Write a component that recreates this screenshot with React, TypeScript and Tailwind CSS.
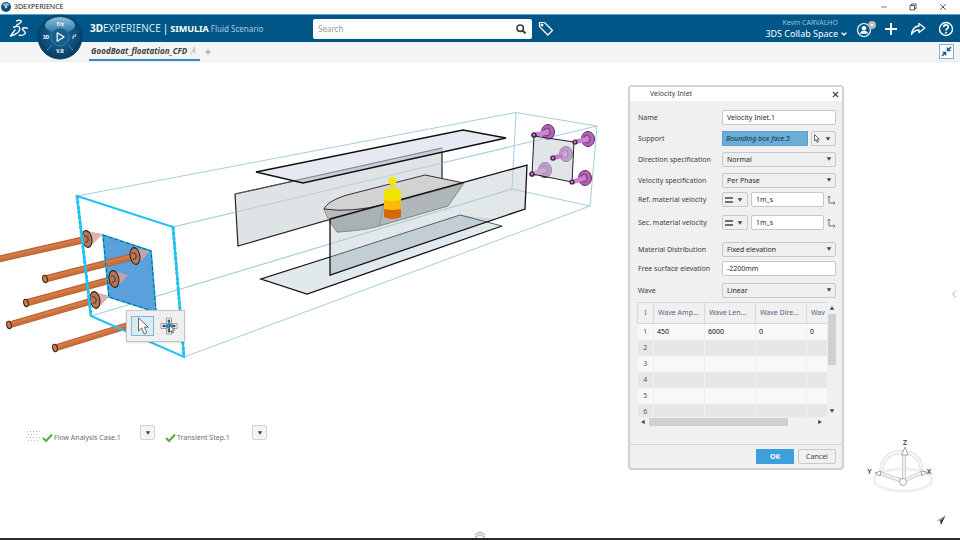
import type { ReactNode } from 'react';
import { ChevronDown, ChevronLeft, Minus, Plus, X } from 'lucide-react';

const FIELD =
	'min-w-0 rounded-xs border border-[#c6c8ca] px-1 text-[7px] leading-3 text-[#2b2b2b] outline-none';

const ICON_BUTTON = 'flex shrink-0 items-center justify-center';

function Caret({ className = '' }: { className?: string }) {
	return (
		<svg viewBox="0 0 6 4" className={`h-1 w-[6px] shrink-0 ${className}`} aria-hidden="true">
			<path d="M0.700 0.300h4.600L3 3.700z" fill="#444" />
		</svg>
	);
}

/* ---------- top bars ---------- */

function TitleBar() {
	return (
		<div className="flex h-[14px] items-center justify-between bg-white pr-3 pl-[1px]">
			<div className="flex items-center gap-[3px] text-[7px] leading-3 text-[#222]">
				<svg viewBox="0 0 10 10" className="size-[10px]" aria-hidden="true">
					<circle cx="5" cy="5" r="5" fill="#0a4f7d" />
					<path d="M1.500 3a4.200 4.200 0 0 1 7 0L5 5z" fill="#7fb8da" />
					<path d="M4.200 3.800v2.600L6.500 5z" fill="#fff" />
				</svg>
				3DEXPERIENCE
			</div>
			<div className="flex items-center gap-[21px] text-[#333]">
				<button type="button" aria-label="Minimize" className={ICON_BUTTON}>
					<Minus className="size-2" />
				</button>
				<button type="button" aria-label="Restore" className={ICON_BUTTON}>
					<svg viewBox="0 0 8 8" className="size-2" fill="none" stroke="#333" strokeWidth="0.800">
						<path d="M1 2.500h4.500V7H1zM2.500 2.500V1H7v4.500H5.500" />
					</svg>
				</button>
				<button type="button" aria-label="Close window" className={ICON_BUTTON}>
					<X className="size-[10px]" />
				</button>
			</div>
		</div>
	);
}

function DassaultLogo() {
	return (
		<svg
			viewBox="0 0 20 20"
			className="size-5 shrink-0"
			fill="none"
			stroke="#fff"
			strokeWidth="1.400"
			strokeLinecap="round"
			strokeLinejoin="round"
			aria-hidden="true"
		>
			<path d="M8.500 1.800c2.600-.8 4.800-.6 4.800.5 0 1.200-2.400 2.700-4.600 3.700" />
			<path d="M5.500 8.300c3.400-1.500 6.300-1.400 6.300 1.200 0 3-3.600 6-9.300 7.500L7 10.800" />
			<path d="M19.500 9.200c-2.800-1-5.200-.4-5 1 .2 1.300 3.200 2.200 2.800 4-.4 1.600-3.300 2.400-6 2" />
		</svg>
	);
}

function Compass() {
	return (
		<svg viewBox="0 0 50 50" className="size-full" aria-hidden="true">
			<defs>
				<radialGradient id="compassBody" cx="50%" cy="45%" r="55%">
					<stop offset="0" stopColor="#1c6c9e" />
					<stop offset="0.6" stopColor="#0f527f" />
					<stop offset="1" stopColor="#083b60" />
				</radialGradient>
				<linearGradient id="compassTop" x1="0" y1="0" x2="0" y2="1">
					<stop offset="0" stopColor="#8fc0dc" />
					<stop offset="1" stopColor="#2f7aa8" />
				</linearGradient>
			</defs>
			<circle cx="25" cy="25" r="22" fill="url(#compassBody)" stroke="#0b4268" />
			<path d="M10 13.500q1-7 15-8.500q14 1.500 15 8.500q0 4-7.500 6.500a10 10 0 0 0-15 0Q10 17.500 10 13.500z" fill="url(#compassTop)" />
			<circle cx="25" cy="25" r="9" fill="#14608f" stroke="#3b86b2" strokeWidth="0.800" />
			<path d="M12 38l5-5M38 38l-5-5" stroke="#5b9dc4" strokeWidth="0.800" />
			<path d="M22.200 20.800v8.400l6.800-4.200z" fill="none" stroke="#fff" strokeWidth="1.200" strokeLinejoin="round" />
			<g fill="#fff" fontSize="5" fontWeight="700" textAnchor="middle">
				<text x="11" y="27">3D</text>
				<text x="25" y="14" fontStyle="italic">Y/x</text>
				<text x="39" y="27" fontStyle="italic">i²</text>
				<text x="25" y="41">V.R</text>
			</g>
		</svg>
	);
}

function HeaderActions() {
	return (
		<div className="flex items-center gap-3 text-white">
			<div className="flex flex-col items-end">
				<span className="pr-[6px] text-[7px] leading-[10px] text-[#9cc4dc]">Kevin CARVALHO</span>
				<button type="button" className="-mr-1 flex items-center gap-[2px] text-[9px] leading-3">
					3DS Collab Space
					<ChevronDown className="size-2" strokeWidth={4} />
				</button>
			</div>
			<button type="button" aria-label="Profile" className={ICON_BUTTON}>
				<svg viewBox="0 0 20 16" className="h-4 w-5">
					<circle cx="8" cy="9" r="6.500" fill="none" stroke="#fff" strokeWidth="1.200" />
					<circle cx="8" cy="7.200" r="2.300" fill="#fff" />
					<path d="M4 12.800c.3-2.200 1.600-3 4-3s3.700.8 4 3z" fill="#fff" />
					<circle cx="16" cy="4" r="4" fill="#b6b9bb" />
					<circle cx="16" cy="4" r="1.300" fill="#fff" />
				</svg>
			</button>
			<button type="button" aria-label="Add" className={`${ICON_BUTTON} -ml-1`}>
				<svg viewBox="0 0 14 14" className="size-[14px]" stroke="#fff" strokeWidth="2">
					<path d="M7 1v12M1 7h12" />
				</svg>
			</button>
			<button type="button" aria-label="Share" className={ICON_BUTTON}>
				<svg viewBox="0 0 16 14" className="h-[14px] w-4" fill="none" stroke="#fff" strokeWidth="1.300" strokeLinejoin="round">
					<path d="M9 1.500l5.800 4.500L9 10.500V8C5.500 8 3.300 9.300 1.500 12.500 2 7.500 4.500 4.500 9 4z" />
				</svg>
			</button>
			<button type="button" aria-label="Help" className={ICON_BUTTON}>
				<svg viewBox="0 0 16 16" className="size-4" fill="none" stroke="#fff" strokeWidth="1.400">
					<circle cx="8" cy="8" r="6.500" />
					<path d="M5.700 6.300c0-3.200 4.600-3 4.600-.4C10.300 7.600 8 7.600 8 9.500" strokeWidth="1.700" />
					<path d="M8 10.700v1.700" strokeWidth="1.700" />
				</svg>
			</button>
		</div>
	);
}

function Header() {
	return (
		<header className="relative flex h-7 items-center justify-between border-t border-[#5ba5c9] bg-[#005686] pr-[6px] pl-2">
			<DassaultLogo />
			<button type="button" aria-label="Compass" className="absolute top-[-3px] left-[35px] z-10 size-[50px]">
				<Compass />
			</button>
			<div className="flex flex-1 items-center">
				<div className="flex w-[285px] shrink-0 items-baseline gap-[2px] pl-[62px] whitespace-nowrap text-white">
					<span className="text-[10px] leading-4 text-[#d5e7f1]">
						<b className="text-white">3D</b>EXPERIENCE
					</span>
					<span className="text-[10px] leading-4">|</span>
					<b className="text-[9px] leading-4">SIMULIA</b>
					<span className="text-[8px] leading-4 text-[#a6cde2]">Fluid Scenario</span>
				</div>
				<form role="search" className="flex h-5 w-[219px] items-center rounded-xs bg-white pr-[6px] pl-[5px]">
					<input
						aria-label="Search"
						placeholder="Search"
						className="min-w-0 flex-1 text-[8px] leading-3 outline-none placeholder:text-[#9a9a9a]"
					/>
					<button type="submit" aria-label="Run search" className={ICON_BUTTON}>
						<svg viewBox="0 0 10 10" className="size-[10px]" fill="none" stroke="#3f3f3f">
							<circle cx="4.200" cy="4.200" r="3.200" strokeWidth="1.600" />
							<path d="M6.500 6.500l3 3" strokeWidth="2" />
						</svg>
					</button>
				</form>
				<button type="button" aria-label="6WTags" className={`${ICON_BUTTON} ml-[6px]`}>
					<svg viewBox="0 0 16 16" className="size-4" fill="none" stroke="#fff" strokeWidth="1.200" strokeLinejoin="round">
						<path d="M1.500 1.500v4.200l8.300 8.300 4.700-4.500L6.500 1.500z" />
						<circle cx="4" cy="4" r="0.900" />
					</svg>
				</button>
			</div>
			<HeaderActions />
		</header>
	);
}

function TabBar() {
	return (
		<nav className="flex h-5 items-stretch justify-between border-b border-[#e8eaeb] bg-[#f2f4f5] pr-[6px] pl-[89px]">
			<div className="flex items-stretch gap-1">
				<a
					href="#goodboat"
					className="flex w-[111px] items-center gap-1 border-b-2 border-[#3d8abd] pl-[2px] text-[8px] leading-3 font-bold whitespace-nowrap text-[#3f3f3f] italic"
				>
					GoodBoat_floatation_CFD
					<span className="font-normal text-[#b5b5b5]">A</span>
				</a>
				<button type="button" aria-label="New tab" className={ICON_BUTTON}>
					<Plus className="size-2 text-[#999]" strokeWidth={3} />
				</button>
			</div>
			<button
				type="button"
				aria-label="Leave full screen"
				className="mt-[2px] flex size-[15px] items-center justify-center border border-[#7fb0cc] bg-white"
			>
				<svg viewBox="0 0 11 11" className="size-[11px]" fill="#0b5a8a" stroke="#0b5a8a">
					<path d="M6 5V1.500L9.500 5zM5 6v3.500L1.500 6z" strokeWidth="0.500" />
					<path d="M7.500 3.500L10 1M3.500 7.500L1 10" strokeWidth="1.500" />
				</svg>
			</button>
		</nav>
	);
}

/* ---------- 3D scene ---------- */

const inletArrows = [
	{ tail: [-10, 261], disc: [87, 239], tip: [103, 234] },
	{ tail: [45, 279], disc: [135, 256], tip: [150, 251] },
	{ tail: [26, 303], disc: [114, 279], tip: [128, 275] },
	{ tail: [9, 325], disc: [95, 300], tip: [110, 296] },
];

const outletArrows = [
	{ tail: [534, 135], disc: [548, 132] },
	{ tail: [553, 158], disc: [566, 154] },
	{ tail: [532, 174], disc: [545, 170] },
	{ tail: [575, 142], disc: [588, 139] },
	{ tail: [572, 182], disc: [585, 178] },
];

function Shaft({ from, to }: { from: number[]; to: number[] }) {
	return (
		<>
			<path d={`M${from}L${to}`} stroke="#b9622f" strokeWidth="7" />
			<path d={`M${from}L${to}`} stroke="#cb6f3c" strokeWidth="5" />
			<path d={`M${from[0]} ${from[1] - 1}L${to[0]} ${to[1] - 1}`} stroke="#d47d49" strokeWidth="2" />
			<ellipse cx={from[0]} cy={from[1]} rx="2.300" ry="3.800" fill="#c97a50" stroke="#3a2013" transform={`rotate(-12 ${from})`} />
		</>
	);
}

function OutletArrow({ tail, disc }: { tail: number[]; disc: number[] }) {
	return (
		<g>
			<ellipse cx={disc[0]} cy={disc[1]} rx="6.500" ry="7.500" fill="#b565b8" stroke="#5b2d60" />
			<ellipse cx={disc[0] - 1} cy={disc[1]} rx="3.300" ry="4" fill="#c073c2" stroke="#5b2d60" strokeWidth="0.800" />
			<path d={`M${tail}L${disc}`} stroke="#cf80d2" strokeWidth="4.500" />
			<circle cx={tail[0]} cy={tail[1]} r="2" fill="#b77cba" stroke="#3a1a40" strokeWidth="1.200" />
		</g>
	);
}

function Scene() {
	return (
		<svg viewBox="0 62 625 361" className="h-[361px] w-[625px] shrink-0" fill="none" role="img" aria-label="Boat in fluid domain">
			{/* bounding box */}
			<g stroke="#a5cde0">
				<path d="M77 196L516 112.500L597 126L173 227" />
				<path d="M516 112.500L512 189L590 206L597 126" />
				<path d="M91 316L512 189M184 357L590 206" />
			</g>

			{/* outlet */}
			{outletArrows.slice(0, 3).map((a) => (
				<OutletArrow key={a.tail.join()} {...a} />
			))}
			<path d="M534 136L574 142L572 182L532 174z" fill="#c9d0d6" fillOpacity="0.550" stroke="#222" />
			<path d="M553 158L563 155.500" stroke="#c878cc" strokeWidth="4" />
			{outletArrows.slice(3).map((a) => (
				<OutletArrow key={a.tail.join()} {...a} />
			))}
			{outletArrows.slice(0, 3).map(({ tail }) => (
				<circle key={tail.join()} cx={tail[0]} cy={tail[1]} r="2" fill="#b77cba" stroke="#3a1a40" strokeWidth="1.200" />
			))}

			{/* section planes and boat */}
			<path d="M235 194L442 148L442 187L238 246z" fill="#d3dadc" fillOpacity="0.750" stroke="#222" strokeWidth="1.200" />
			<path d="M256 172L463 130L506 138L303 183z" fill="#e0e3ed" fillOpacity="0.800" />
			<path d="M289 181L442 148V152L303 183z" fill="#b9bfcc" fillOpacity="0.600" />
			<path d="M235 194L442 148" stroke="#69707c" strokeOpacity="0.700" />
			<path d="M256 172L463 130L506 138L303 183z" stroke="#111" strokeWidth="1.300" />
			<path d="M173 227L506 148M91 316L512 189" stroke="#a5cde0" strokeOpacity="0.500" />
			<path d="M261 279L460 215L502 226L307 294z" fill="#dde5ea" fillOpacity="0.850" />
			<path d="M330 257L261 279L307 294L502 226" stroke="#111" strokeWidth="1.300" />
			<path d="M324 209L329 220L337 232C350 231 364 230 379 226L448 206L464 183L387 204Q350 213 324 209z" fill="#a8adb0" stroke="#555" />
			<path d="M324 209L329 220L384 205Q350 213 324 209z" fill="#bcbaba" />
			<path d="M324 209C326 204 334 199 347 195L425 175L464 183L387 204Q350 213 324 209z" fill="#d3d1d1" stroke="#333" />
			<path d="M329 220L384 205L379 226C364 230 350 231 337 232z" fill="#9ba2a4" stroke="#666" strokeWidth="0.800" />
			<path d="M330 219L527 165L525 209L330 275z" fill="#b9c6cb" fillOpacity="0.420" />
			<path d="M330 257L460 215L496 219L330 275z" fill="#a5b6c4" fillOpacity="0.350" />
			<path d="M330 257L460 215L502 226" stroke="#55606a" />
			<path d="M330 219L527 165L525 209L330 275z" stroke="#111" strokeWidth="1.300" />

			{/* probe */}
			<path d="M392.500 182v8" stroke="#e3dd00" strokeWidth="2.500" />
			<circle cx="392.500" cy="181" r="4.200" fill="#efe900" />
			<path d="M384 190Q392.500 186 401 190V201H384z" fill="#ece600" />
			<path d="M384 200Q392.500 202 401 200V210H384z" fill="#fcb90a" />
			<path d="M384 209Q392.500 211 401 209V217Q392.500 221 384 217z" fill="#d46a06" />

			{/* inlet */}
			<path d="M103 235L151 251L156 312L109 297z" fill="#5c9fdd" />
			<Shaft from={[55, 348]} to={[136, 323]} />
			{inletArrows.map(({ tail, disc, tip }) => (
				<g key={tail.join()}>
					<Shaft from={tail} to={disc} />
					<path d={`M${disc[0]} ${disc[1] - 8}L${tip}L${disc[0] + 3} ${disc[1] + 8}z`} fill="#d3a79c" fillOpacity="0.850" />
					<ellipse cx={disc[0]} cy={disc[1]} rx="4.800" ry="8.500" fill="#b5775a" stroke="#33201a" strokeWidth="1.100" transform={`rotate(-10 ${disc})`} />
					<path d={`M${disc[0] - 3} ${disc[1] - 3}q5 -1 4 5q-1 2 -3 1`} stroke="#4a2a1c" />
				</g>
			))}
			<path d="M103 235L151 251L156 312L109 297z" stroke="#22b8ee" strokeWidth="1.800" />
			<path d="M103 235L151 251L156 312L109 297z" stroke="#1a5c7c" strokeDasharray="4 2" />
			<path d="M77 196L173 227L184 357L91 316z" stroke="#1fc4f4" strokeWidth="2" />
			<path d="M77 196L91 316M173 227L184 357" stroke="#35b5e0" strokeWidth="3" strokeDasharray="3 2" />
			<path d="M77 196L91 316M173 227L184 357" stroke="#1fc4f4" strokeWidth="2" />
		</svg>
	);
}

function SelectionToolbar() {
	return (
		<div
			role="toolbar"
			aria-label="Selection"
			className="absolute top-[248px] left-[126px] flex h-8 w-[59px] items-center gap-[3px] border border-[#c4c4c4] bg-[#efefef] px-1 shadow"
		>
			<button type="button" aria-label="Select" className="flex h-5 w-6 items-center justify-center border border-[#7db8d8] bg-[#dcebf3]">
				<svg viewBox="0 0 12 18" className="h-[18px] w-3" fill="#fff" stroke="#666">
					<path d="M1.500 1v13l3.200-3 2.500 6 2.600-1.200-2.500-5.600h4z" />
				</svg>
			</button>
			<button type="button" aria-label="Multi-select" className="flex h-5 w-6 items-center justify-center">
				<svg viewBox="0 0 18 18" className="size-[18px]">
					<path d="M6.500 1h5v5.500H17v5h-5.500V17h-5v-5.500H1v-5h5.500z" fill="#fff" stroke="#888" strokeWidth="0.800" />
					<path d="M9 2.500v13M2.500 9h13" stroke="#333" strokeWidth="1.300" />
					<path d="M7.500 4h3M7.500 14h3M4 7.500v3M14 7.500v3" stroke="#333" />
					<path d="M6 7l3-1.500L12.500 7v4L9.500 12.500 6 11z" fill="#2f8fc7" />
					<path d="M9.500 8.500l5 4.500-2 .2 1 2.300-1.200.6-1.100-2.300-1.500 1.300z" fill="#fff" stroke="#333" strokeWidth="0.700" />
				</svg>
			</button>
		</div>
	);
}

function ActionItem({ title, className = '' }: { title: string; className?: string }) {
	return (
		<div className={`flex items-start justify-between ${className}`}>
			<div className="flex items-center gap-[1px] pt-[7px] text-[7px] leading-3 whitespace-nowrap text-[#6d6d6d]">
				<svg viewBox="0 0 11 10" className="h-[10px] w-[11px]" fill="none" stroke="#56ab48" strokeWidth="2" aria-hidden="true">
					<path d="M1 5l3 3 6-6.500" />
				</svg>
				{title}
			</div>
			<button
				type="button"
				aria-label={`${title} menu`}
				className="flex size-[15px] items-center justify-center rounded-xs border border-[#d2d2d2] bg-[#f4f4f4]"
			>
				<Caret />
			</button>
		</div>
	);
}

function AxisWidget() {
	return (
		<svg viewBox="0 0 70 58" className="h-[58px] w-[70px]" fill="none" aria-hidden="true">
			<ellipse cx="36" cy="41" rx="29" ry="11" stroke="#f0f0f0" strokeWidth="3" />
			<path d="M14 33Q16 14 33 13Q54 13 55 33" stroke="#dedede" strokeWidth="4" />
			<path d="M14 33Q16 14 33 13Q54 13 55 33" stroke="#fafafa" strokeWidth="2" />
			<path d="M37 40V16M36 42L12 34M36 42L54 34" stroke="#cfcfcf" strokeWidth="4" />
			<path d="M37 40V16M36 42L12 34M36 42L54 34" stroke="#f1f1f1" strokeWidth="2" />
			<path d="M34.500 16L38 8l3 8zM8 34l6-2-1 5zM60 33l-6-1 1 5z" fill="#fff" stroke="#8d8d8d" strokeWidth="0.800" />
			<circle cx="36" cy="43" r="3.500" fill="#fff" stroke="#aaa" />
			<g fill="#555" fontSize="7" fontWeight="700" textAnchor="middle">
				<text x="38" y="6">Z</text>
				<text x="2.500" y="35">Y</text>
				<text x="62" y="35">X</text>
			</g>
		</svg>
	);
}

/* ---------- dialog ---------- */

function Row({ id, label, children }: { id: string; label: string; children: ReactNode }) {
	return (
		<div className="flex h-[15px] items-center">
			<label htmlFor={id} className="flex-1 text-[7px] leading-3 text-[#3c3f42]">
				{label}
			</label>
			<div className="flex w-[114px] shrink-0 items-center gap-[3px]">{children}</div>
		</div>
	);
}

function Select({ id, value }: { id: string; value: string }) {
	return (
		<div className="relative w-full">
			<select id={id} className={`${FIELD} block h-[15px] w-full appearance-none bg-[#efefef]`}>
				<option>{value}</option>
			</select>
			<Caret className="pointer-events-none absolute top-[5px] right-1" />
		</div>
	);
}

function Velocity({ id }: { id: string }) {
	return (
		<>
			<button
				type="button"
				aria-label="Value type"
				className="flex h-[15px] w-[26px] shrink-0 items-center justify-between rounded-xs border border-[#c6c8ca] pr-1 pl-[2px]"
			>
				<svg viewBox="0 0 8 6" className="h-[6px] w-2" aria-hidden="true">
					<path d="M0 1h8M0 5h8" stroke="#444" strokeWidth="1.600" />
				</svg>
				<Caret />
			</button>
			<input id={id} defaultValue="1m_s" className={`${FIELD} h-[15px] flex-1 bg-white`} />
			<button type="button" aria-label="Local axis" className="shrink-0">
				<svg viewBox="0 0 9 10" className="h-[10px] w-[9px]" fill="none" stroke="#777">
					<path d="M2 2v6h5M0.500 2.500L2 1l1.500 1.500M6.500 6.500L8 8 6.500 9.500" />
				</svg>
			</button>
		</>
	);
}

const waveColumns = ['Wave Amp...', 'Wave Len...', 'Wave Dire...', 'Wav'];
const waveRows = [['450', '6000', '0', '0'], [], [], [], [], []];

function WaveTable() {
	return (
		<div className="mt-1 -ml-px grid grid-cols-[1fr_9px]">
			<div className="h-[115px] overflow-hidden">
				<table className="w-full table-fixed border-collapse text-left text-[7px] leading-3">
					<thead>
						<tr className="h-[21px] text-[#4f6780]">
							<th className="w-4 border border-[#d5d8da] text-center font-normal">I</th>
							{waveColumns.map((title) => (
								<th
									key={title}
									className="w-[51px] border border-[#d5d8da] pl-1 font-normal whitespace-nowrap last:w-auto last:border-r-0"
								>
									{title}
								</th>
							))}
						</tr>
					</thead>
					<tbody>
						{waveRows.map((cells, i) => (
							<tr key={i} className="h-4 odd:bg-[#f8f8f8] even:bg-[#e7e7e7]">
								<td className="border-r border-[#f0f0f0] text-center text-[#555]">{i + 1}</td>
								{waveColumns.map((title, col) => (
									<td key={title} className="border-r border-[#f0f0f0] pl-[3px] text-[#111] last:border-r-0">
										{cells[col]}
									</td>
								))}
							</tr>
						))}
					</tbody>
				</table>
			</div>
			<div className="flex flex-col items-center justify-between pb-1">
				<div className="flex w-full flex-col items-end gap-1 pt-1">
					<Caret className="mx-auto rotate-180" />
					<div className="h-[51px] w-2 bg-[#cfd1d0]" />
				</div>
				<Caret />
			</div>
			<div className="mt-px flex h-2 items-center pr-1 pl-[3px]">
				<Caret className="rotate-90" />
				<div className="mr-auto ml-[3px] h-2 w-[139px] bg-[#cfd1d0]" />
				<Caret className="-rotate-90" />
			</div>
		</div>
	);
}

function VelocityInletDialog() {
	return (
		<section
			aria-label="Velocity Inlet"
			className="absolute top-[23px] right-[116px] w-[216px] rounded-sm border-2 border-[#cfd2d4] bg-[#f0f0f0]"
		>
			<header className="flex h-[14px] items-center justify-between bg-white pr-[2px] pl-5">
				<h2 className="text-[7px] leading-3 text-[#3c3f42]">Velocity Inlet</h2>
				<button type="button" aria-label="Close">
					<X className="size-[9px] text-[#444]" strokeWidth={3} />
				</button>
			</header>
			<form>
				<div className="pt-[9px] pr-[6px] pb-[18px] pl-2">
					<div className="flex flex-col gap-[6px]">
						<Row id="name" label="Name">
							<input id="name" defaultValue="Velocity Inlet.1" className={`${FIELD} h-[15px] w-full bg-white`} />
						</Row>
						<Row id="support" label="Support">
							<input
								id="support"
								defaultValue="Bounding box face.5"
								className="h-[15px] min-w-0 flex-1 border border-[#5d9fc9] bg-[#6aaed8] px-[3px] text-[7px] leading-3 text-[#12303f] italic outline-none"
							/>
							<button
								type="button"
								aria-label="Pick support"
								className="flex h-[15px] w-[25px] shrink-0 items-center justify-between rounded-xs border border-[#c6c8ca] pr-1 pl-[2px]"
							>
								<svg viewBox="0 0 6 9" className="h-[9px] w-[6px]" fill="#fff" stroke="#444" strokeWidth="0.800">
									<path d="M0.600 0.600v6.400l1.500-1.300 1.200 2.700 1.100-.5-1.100-2.600h2z" />
								</svg>
								<Caret />
							</button>
						</Row>
						<Row id="direction" label="Direction specification">
							<Select id="direction" value="Normal" />
						</Row>
						<Row id="velocity" label="Velocity specification">
							<Select id="velocity" value="Per Phase" />
						</Row>
					</div>
					<div className="mt-1 flex flex-col gap-2">
						<Row id="ref" label="Ref. material velocity">
							<Velocity id="ref" />
						</Row>
						<Row id="sec" label="Sec. material velocity">
							<Velocity id="sec" />
						</Row>
					</div>
					<div className="mt-3 flex flex-col gap-1">
						<Row id="distribution" label="Material Distribution">
							<Select id="distribution" value="Fixed elevation" />
						</Row>
						<Row id="elevation" label="Free surface elevation">
							<input id="elevation" defaultValue="-2200mm" className={`${FIELD} h-[15px] w-full bg-white`} />
						</Row>
					</div>
					<div className="mt-[7px]">
						<Row id="wave" label="Wave">
							<Select id="wave" value="Linear" />
						</Row>
					</div>
					<WaveTable />
				</div>
				<footer className="flex justify-end gap-1 border-t border-[#d2d4d6] px-[6px] py-1 text-[7px] leading-3">
					<button type="button" className="h-[15px] w-[38px] bg-[#3d9fdb] font-bold text-white">
						OK
					</button>
					<button type="button" className="h-[15px] w-[38px] rounded-xs border border-[#c6c8ca] text-[#444]">
						Cancel
					</button>
				</footer>
			</form>
		</section>
	);
}

export default function App() {
	return (
		<div className="flex min-h-screen flex-col bg-white font-['Noto_Sans',sans-serif]">
			<TitleBar />
			<Header />
			<TabBar />
			<main className="relative flex flex-1 flex-col overflow-hidden border-b-2 border-[#2b2b2b]">
				<Scene />
				<SelectionToolbar />
				<div className="flex pt-[2px] pl-[27px]">
					<svg viewBox="0 0 13 13" className="mt-[5px] mr-[2px] h-[13px] w-[13px]" stroke="#bbb" strokeDasharray="1 2" aria-hidden="true">
						<path d="M0 1.500h13M1 4.500h12M0 7.500h13M1 10.500h12" />
					</svg>
					<ActionItem title="Flow Analysis Case.1" className="w-[113px]" />
					<ActionItem title="Transient Step.1" className="ml-[10px] w-[102px]" />
				</div>
				<VelocityInletDialog />
				<button type="button" aria-label="Open side panel" className="absolute top-[226px] right-0">
					<ChevronLeft className="size-3 text-[#aaa]" />
				</button>
				<div className="absolute right-[23px] bottom-[41px]">
					<AxisWidget />
				</div>
				<svg viewBox="0 0 10 10" className="absolute right-[14px] bottom-[13px] size-[10px]" aria-hidden="true">
					<path d="M9.500 0.500L0.500 5.500l3.500.5z" fill="#aaa" />
					<path d="M9.500 0.500L4 6l1 4z" fill="#333" />
				</svg>
				<button type="button" aria-label="Show action bar" className="absolute bottom-0 left-1/2 -translate-x-1/2">
					<svg viewBox="0 0 12 7" className="h-[7px] w-3" fill="none" stroke="#999">
						<path d="M1 4l5-3 5 3M1 6.500l5-3 5 3" />
					</svg>
				</button>
			</main>
		</div>
	);
}
